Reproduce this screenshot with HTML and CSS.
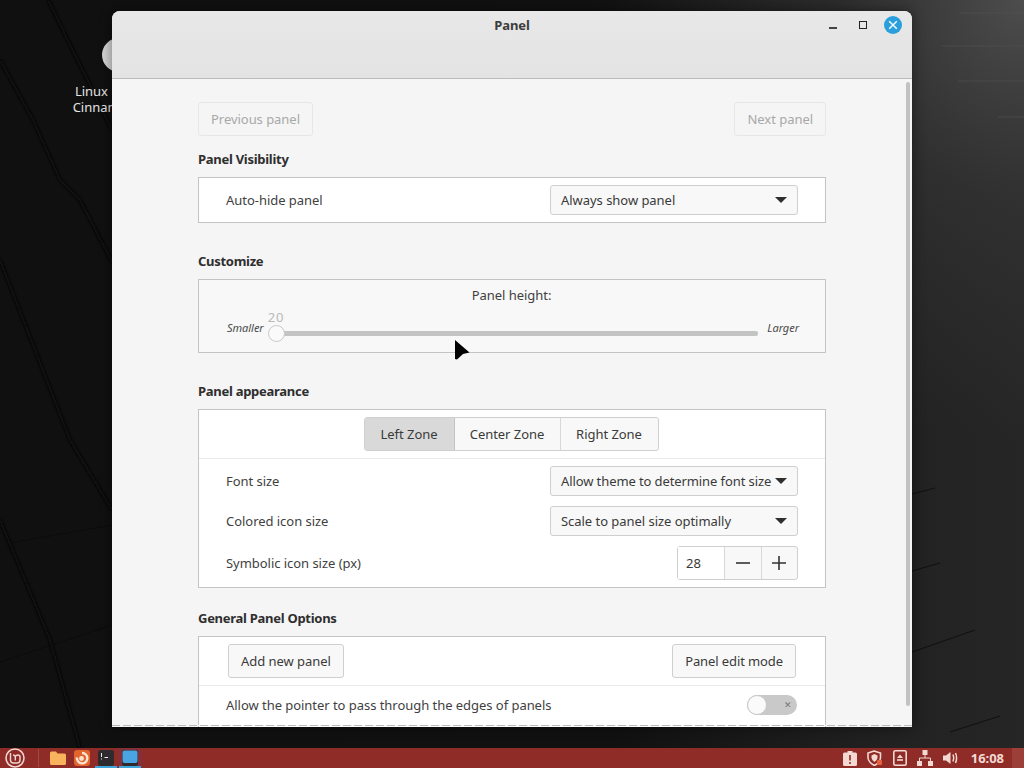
FILE: index.html
```html
<!DOCTYPE html>
<html lang="en">
<head>
<meta charset="utf-8">
<title>Panel</title>
<link rel="stylesheet" href="styles.css">
</head>
<body>
<div class="screen">
  <main class="desktop">
    <svg class="wallpaper" viewBox="0 0 1024 748" preserveAspectRatio="none" aria-hidden="true">
      <defs>
        <linearGradient id="wall" x1="0" y1="0" x2="1" y2="0">
          <stop offset="0" stop-color="#101010"/>
          <stop offset=".6" stop-color="#111111"/>
          <stop offset=".88" stop-color="#222222"/>
          <stop offset="1" stop-color="#262626"/>
        </linearGradient>
        <radialGradient id="glow" gradientUnits="userSpaceOnUse" cx="1024" cy="0" r="440">
          <stop offset="0" stop-color="#5a5a5a" stop-opacity=".75"/>
          <stop offset=".45" stop-color="#4a4a4a" stop-opacity=".3"/>
          <stop offset="1" stop-color="#444" stop-opacity="0"/>
        </radialGradient>
        <filter id="soft" x="-20%" y="-20%" width="140%" height="140%"><feGaussianBlur stdDeviation="1.8"/></filter>
      </defs>
      <rect width="1024" height="748" fill="url(#wall)"/>
      <rect width="1024" height="748" fill="url(#glow)"/>
      <g filter="url(#soft)" fill="none" stroke="#070707" stroke-width="3">
        <path d="M48 0 112 130"/>
        <path d="M0 60 33 120 60 180 80 200 112 262"/>
        <path d="M0 260 35 350 70 440 112 510"/>
        <path d="M0 520 50 640 80 748"/>
      </g>
      <g fill="none" stroke="#0b0b0b" stroke-width="1" opacity=".8">
        <path d="M10 543 112 525"/>
        <path d="M0 662 112 625"/>
        <path d="M912 494 935 488"/>
        <path d="M912 571 940 563"/>
        <path d="M912 652 975 630"/>
        <path d="M950 732 1000 716"/>
      </g>
      <g fill="none" stroke="#555" stroke-width="1" opacity=".55">
        <path d="M960 13H1024"/>
        <path d="M942 46H1024"/>
        <path d="M958 81H1024"/>
        <path d="M998 117H1024"/>
      </g>
    </svg>

    <div class="launcher">
      <span class="launcher-icon"></span>
      <span class="launcher-label">Linux Mint</span>
      <span class="launcher-label launcher-label-alt">Cinnamon</span>
    </div>

    <section class="window">
      <header class="titlebar">
        <h1 class="title">Panel</h1>
        <div class="window-controls">
          <span class="ctl-min"></span>
          <span class="ctl-max"></span>
          <span class="ctl-close">
            <svg width="18" height="18" viewBox="0 0 18 18"><path d="M5.2 5.2 12.8 12.8M12.8 5.2 5.2 12.8" stroke="#f2fafd" stroke-width="1.5"/></svg>
          </span>
        </div>
      </header>

      <div class="content">
        <div class="nav-row">
          <button class="btn btn-disabled">Previous panel</button>
          <button class="btn btn-disabled">Next panel</button>
        </div>

        <h2 class="section-title st-visibility">Panel Visibility</h2>
        <div class="card">
          <div class="row row-single">
            <span class="label">Auto-hide panel</span>
            <div class="select"><span>Always show panel</span><i class="caret"></i></div>
          </div>
        </div>

        <h2 class="section-title st-next">Customize</h2>
        <div class="card card-tint">
          <div class="slider-box">
            <div class="slider-title">Panel height:</div>
            <div class="slider-row">
              <span class="slider-end">Smaller</span>
              <div class="slider">
                <span class="slider-value">20</span>
                <span class="slider-trough"></span>
                <span class="slider-knob"></span>
              </div>
              <span class="slider-end">Larger</span>
            </div>
          </div>
        </div>

        <h2 class="section-title st-next2">Panel appearance</h2>
        <div class="card">
          <div class="zones">
            <div class="zone-group">
              <span class="zone zone-active">Left Zone</span>
              <span class="zone zone-center">Center Zone</span>
              <span class="zone zone-right">Right Zone</span>
            </div>
          </div>
          <div class="row row-font">
            <span class="label">Font size</span>
            <div class="select select-tight"><span>Allow theme to determine font size</span><i class="caret"></i></div>
          </div>
          <div class="row row-icon">
            <span class="label">Colored icon size</span>
            <div class="select"><span>Scale to panel size optimally</span><i class="caret"></i></div>
          </div>
          <div class="row row-spin">
            <span class="label">Symbolic icon size (px)</span>
            <div class="spin">
              <span class="spin-value">28</span>
              <span class="spin-btn"><svg width="14" height="14" viewBox="0 0 14 14"><path d="M0 7H14" stroke="#333" stroke-width="1.6"/></svg></span>
              <span class="spin-btn"><svg width="14" height="14" viewBox="0 0 14 14"><path d="M0 7H14M7 0V14" stroke="#333" stroke-width="1.6"/></svg></span>
            </div>
          </div>
        </div>

        <h2 class="section-title st-next3">General Panel Options</h2>
        <div class="card card-last">
          <div class="row row-buttons">
            <button class="btn">Add new panel</button>
            <button class="btn btn-edit">Panel edit mode</button>
          </div>
          <div class="row row-switch">
            <span class="label">Allow the pointer to pass through the edges of panels</span>
            <div class="switch"><span class="switch-knob"></span><span class="switch-x">✕</span></div>
          </div>
        </div>
      </div>

      <div class="scrollbar"></div>
      <div class="dash"></div>
    </section>

    <svg class="pointer" width="18" height="22" viewBox="0 0 18 22" aria-hidden="true">
      <path d="M1 1 15.5 13.5 9 15 3 20.5 1 20Z" fill="#000"/>
    </svg>
  </main>

  <footer class="panel">
    <div class="panel-left">
      <span class="menu-icon">
        <svg width="20" height="20" viewBox="0 0 20 20"><circle cx="10" cy="10" r="9" fill="none" stroke="#f1d8d3" stroke-width="1.5"/><path d="M5.5 5V12Q5.5 15 8.5 15H12Q15 15 15 12V9Q15 7 13 7 11 7 10.3 8.6V12.5M10.3 8.6Q9.6 7 8 7" fill="none" stroke="#f1d8d3" stroke-width="1.4"/></svg>
      </span>
      <span class="panel-sep"></span>
      <span class="app app-files">
        <svg width="16" height="14" viewBox="0 0 16 14"><path d="M0 2Q0 .5 1.5 .5H6L7.5 2.5H14.5Q16 2.5 16 4V12.5Q16 14 14.5 14H1.5Q0 14 0 12.5Z" fill="#f9b35d"/></svg>
      </span>
      <span class="app app-fox">
        <svg width="16" height="16" viewBox="0 0 16 16"><rect width="16" height="16" rx="3" fill="#e2642c"/><path d="M8 3A5.2 5.2 0 1 1 3 7.5" fill="none" stroke="#fbe3d3" stroke-width="2.4"/><circle cx="7.5" cy="8.5" r="2.4" fill="#fbe3d3"/></svg>
      </span>
      <span class="app app-term">
        <svg width="16" height="16" viewBox="0 0 16 16"><rect width="16" height="16" rx="2.5" fill="#2f2a2e"/><path d="M3.5 3V7M3.5 8.5V9.5" stroke="#eee"/><path d="M6.5 7.5H10" stroke="#eee"/></svg>
        <i class="running"></i>
      </span>
      <span class="app app-blue">
        <svg width="16" height="16" viewBox="0 0 16 16"><rect width="16" height="16" rx="2.5" fill="#2f2a2e"/><rect x=".5" y=".5" width="15" height="12.5" rx="2" fill="#4aa3e3"/></svg>
        <i class="running"></i>
      </span>
    </div>
    <div class="panel-right">
      <svg width="14" height="16" viewBox="0 0 14 16"><path d="M1.5 2.5H4.5V1H9.5V2.5H12.5Q14 2.5 14 4V14.5Q14 16 12.5 16H1.5Q0 16 0 14.5V4Q0 2.5 1.5 2.5Z" fill="#f3d9d2"/><path d="M7 5V10.5M7 12V14" stroke="#8f2c27" stroke-width="1.6"/></svg>
      <svg width="16" height="16" viewBox="0 0 16 16"><path d="M7 1 13.5 3V8Q13 12.5 7.5 15.5 1.5 12.5 1 8V3Z" fill="none" stroke="#f3d9d2" stroke-width="1.6"/><path d="M7.5 4 10.5 5.5V8Q10 10.5 7.5 12 5 10.5 4.5 8V5.5Z" fill="#f3d9d2"/><rect x="10" y="10" width="5" height="5" rx="1" fill="#e8603c"/></svg>
      <svg width="14" height="16" viewBox="0 0 14 16"><rect x=".8" y=".8" width="12.4" height="14.4" rx="1.5" fill="none" stroke="#f3d9d2" stroke-width="1.6"/><path d="M7 4.5 10 8H4Z" fill="#f3d9d2"/><path d="M4 10H10" stroke="#f3d9d2" stroke-width="1.6"/></svg>
      <svg width="16" height="16" viewBox="0 0 16 16"><rect x="5.5" y="0" width="5" height="5" fill="#f3d9d2"/><rect x="0" y="11" width="5" height="5" fill="#f3d9d2"/><rect x="11" y="11" width="5" height="5" fill="#f3d9d2"/><path d="M8 5V8M2.5 11V8H13.5V11" stroke="#f3d9d2" fill="none"/></svg>
      <svg width="16" height="14" viewBox="0 0 16 14"><path d="M0 4.5H3L7.5 1V13L3 9.5H0Z" fill="#f3d9d2"/><path d="M10 3.5Q11.5 7 10 10.5M12.5 2Q14.7 7 12.5 12" stroke="#f3d9d2" stroke-width="1.5" fill="none"/></svg>
      <span class="clock">16:08</span>
      <span class="show-desktop"></span>
    </div>
  </footer>
</div>
</body>
</html>
```

FILE: styles.css
```css
* { box-sizing: border-box; }

html, body { margin: 0; height: 100%; }

body {
  font-family: "Noto Sans", "Open Sans", sans-serif;
  font-size: 13px;
  letter-spacing: -.04px;
  color: #3a3a3a;
  background: #111;
}

.screen {
  width: 1024px;
  height: 768px;
  display: flex;
  flex-direction: column;
  overflow: hidden;
}

.desktop {
  position: relative;
  flex: 1;
  overflow: hidden;
}

.wallpaper {
  position: absolute;
  inset: 0;
  width: 100%;
  height: 100%;
}

.launcher {
  position: absolute;
  left: 57px;
  top: 38px;
  width: 100px;
  display: flex;
  flex-direction: column;
  align-items: center;
  color: #e4e4e4;
  text-align: center;
  line-height: 16px;
}

.launcher-icon {
  width: 34px;
  height: 34px;
  margin-left: 24px;
  border-radius: 50%;
  background: #d6d6d6;
  margin-bottom: 11px;
}

.launcher-label-alt { padding-right: 6px; }

.window {
  position: absolute;
  left: 112px;
  top: 11px;
  width: 800px;
  height: 716px;
  display: flex;
  flex-direction: column;
  overflow: hidden;
  background: #f5f5f5;
  border-radius: 8px 8px 0 0;
  box-shadow: 0 0 14px rgba(0, 0, 0, .45);
}

.titlebar {
  position: relative;
  flex: none;
  height: 68px;
  background: linear-gradient(#e8e8e8, #e3e3e3);
  border-bottom: 1px solid #bcbcbc;
  display: flex;
  justify-content: center;
}

.title {
  margin: 6px 0 0;
  font-size: 13px;
  line-height: 16px;
  font-weight: 700;
  color: #3c3c3c;
}

.window-controls {
  position: absolute;
  right: 10px;
  top: 5px;
  display: flex;
  align-items: center;
  gap: 16px;
}

.ctl-min {
  width: 8px;
  height: 2px;
  margin-top: 5px;
  margin-right: 6px;
  background: #444;
}

.ctl-max {
  width: 8px;
  height: 8px;
  border: 1px solid #222;
  margin-right: 1px;
}

.ctl-close {
  width: 18px;
  height: 18px;
  border-radius: 50%;
  background: #2a9fdc;
  display: flex;
}

.content {
  flex: 1;
  padding: 23px 86px 0;
  width: 800px;
  overflow: hidden;
}

.nav-row {
  display: flex;
  justify-content: space-between;
}

.btn {
  font: inherit;
  letter-spacing: inherit;
  height: 34px;
  padding: 0 12px;
  color: #3a3a3a;
  background: #f8f8f8;
  border: 1px solid #cfcfcf;
  border-radius: 3px;
}

.btn-edit { letter-spacing: -.1px; }

.btn-disabled {
  color: #a8a8a8;
  background: #f5f5f5;
  border-color: #e6e6e6;
}

.section-title {
  margin: 0;
  font-size: 13px;
  line-height: 16px;
  font-weight: 700;
  letter-spacing: -.28px;
  color: #2e2e2e;
}

.st-visibility { margin-top: 15px; margin-bottom: 10px; }
.st-next { margin-top: 30px; margin-bottom: 10px; }
.st-next2 { margin-top: 30px; margin-bottom: 10px; }
.st-next3 { margin-top: 22px; margin-bottom: 10px; }

.card {
  background: #fff;
  border: 1px solid #c4c4c4;
}

.card-tint { background: #f8f8f8; }

.card-last { border-bottom: 0; height: 100px; }

.row {
  display: flex;
  align-items: center;
  justify-content: space-between;
  padding: 0 27px 0 27px;
}

.row-single { height: 44px; }
.row-font { height: 44px; }
.row-icon { height: 36px; }
.row-spin { height: 48px; }

.row-buttons {
  height: 49px;
  padding-left: 29px;
  padding-right: 29px;
  border-bottom: 1px solid #ebebeb;
}

.row-switch { height: 38px; padding-right: 28px; }

.label { color: #3f3f3f; }

.select {
  width: 248px;
  height: 30px;
  padding: 0 10px;
  display: flex;
  align-items: center;
  justify-content: space-between;
  background: #f8f8f8;
  border: 1px solid #cfcfcf;
  border-radius: 3px;
  color: #3a3a3a;
  white-space: nowrap;
}

.select-tight { letter-spacing: -.1px; }

.caret {
  flex: none;
  width: 0;
  height: 0;
  border-left: 6px solid transparent;
  border-right: 6px solid transparent;
  border-top: 6px solid #2e2e2e;
}

.slider-box {
  height: 72px;
  padding: 7px 26px 0 28px;
}

.slider-title {
  text-align: center;
  line-height: 16px;
  padding-right: 3px;
  color: #3f3f3f;
}

.slider-row {
  display: flex;
  align-items: flex-end;
  margin-top: 9px;
}

.slider-end {
  font-size: 11px;
  font-style: italic;
  color: #4a4a4a;
  line-height: 14px;
  padding-bottom: 7px;
}

.slider {
  position: relative;
  flex: 1;
  height: 30px;
  margin: 0 9px 0 3px;
}

.slider-value {
  position: absolute;
  left: 1px;
  top: -2px;
  color: #b8b8b8;
  letter-spacing: .8px;
  line-height: 14px;
}

.slider-trough {
  position: absolute;
  left: 2px;
  right: 0;
  top: 19px;
  height: 5px;
  background: #c4c4c4;
  border-radius: 2px;
}

.slider-knob {
  position: absolute;
  left: 1px;
  top: 13px;
  width: 17px;
  height: 17px;
  border-radius: 50%;
  background: #fafafa;
  border: 1px solid #c8c8c8;
}

.zones {
  height: 49px;
  display: flex;
  align-items: center;
  justify-content: center;
  border-bottom: 1px solid #ebebeb;
}

.zone-group {
  display: flex;
  height: 34px;
  margin-left: -2px;
  border: 1px solid #cfcfcf;
  border-radius: 3px;
  background: #f8f8f8;
  overflow: hidden;
}

.zone {
  display: flex;
  align-items: center;
  justify-content: center;
  color: #3a3a3a;
}

.zone-active { width: 90px; background: #d9d9d9; border-right: 1px solid #c4c4c4; }
.zone-center { width: 106px; border-right: 1px solid #d8d8d8; }
.zone-right { width: 97px; }

.spin {
  display: flex;
  width: 121px;
  height: 34px;
  background: #f8f8f8;
  border: 1px solid #cfcfcf;
  border-radius: 3px;
}

.spin-value {
  width: 47px;
  padding-left: 8px;
  line-height: 32px;
  background: #fff;
  border-right: 1px solid #d8d8d8;
}

.spin-btn {
  flex: 1;
  display: flex;
  align-items: center;
  justify-content: center;
}

.spin-btn + .spin-btn { border-left: 1px solid #d8d8d8; }

.switch {
  position: relative;
  width: 50px;
  height: 20px;
  border-radius: 10px;
  background: #c9c9c9;
  display: flex;
  align-items: center;
  justify-content: flex-end;
  padding-right: 5px;
}

.switch-knob {
  position: absolute;
  left: 0;
  top: 0;
  width: 20px;
  height: 20px;
  border-radius: 50%;
  background: #fafafa;
  border: 1px solid #c8c8c8;
}

.switch-x {
  font-size: 9px;
  line-height: 10px;
  color: #777;
}

.scrollbar {
  position: absolute;
  right: 2px;
  top: 71px;
  width: 4px;
  height: 624px;
  border-radius: 2px;
  background: #c2c2c2;
}

.dash {
  position: absolute;
  left: 0;
  right: 0;
  bottom: 1px;
  height: 1px;
  background: repeating-linear-gradient(90deg, #bbb 0 8px, #f5f5f5 8px 11px);
}

.pointer {
  position: absolute;
  left: 454px;
  top: 339px;
}

.panel {
  flex: none;
  height: 20px;
  display: flex;
  justify-content: space-between;
  align-items: center;
  background: #8f2c27;
}

.panel-left, .panel-right {
  display: flex;
  align-items: center;
  height: 100%;
}

.menu-icon {
  width: 20px;
  height: 20px;
  margin-left: 5px;
}

.panel-sep {
  width: 1px;
  height: 18px;
  margin-left: 13px;
  background: #a04a44;
}

.app {
  position: relative;
  height: 20px;
  width: 24px;
  display: flex;
  align-items: center;
  justify-content: center;
}

.app-files { margin-left: 7px; }
.app-blue { background: #853038; }

.running {
  position: absolute;
  left: 1px;
  right: 1px;
  bottom: 0;
  height: 2px;
  background: #3fa6dc;
}

.panel-right { gap: 10px; }

.clock {
  margin-left: 2px;
  font-size: 13px;
  font-weight: 700;
  color: #f3d9d2;
  line-height: 20px;
}

.show-desktop {
  width: 12px;
  height: 20px;
  margin-left: -2px;
  background: #9c3f39;
}
```
